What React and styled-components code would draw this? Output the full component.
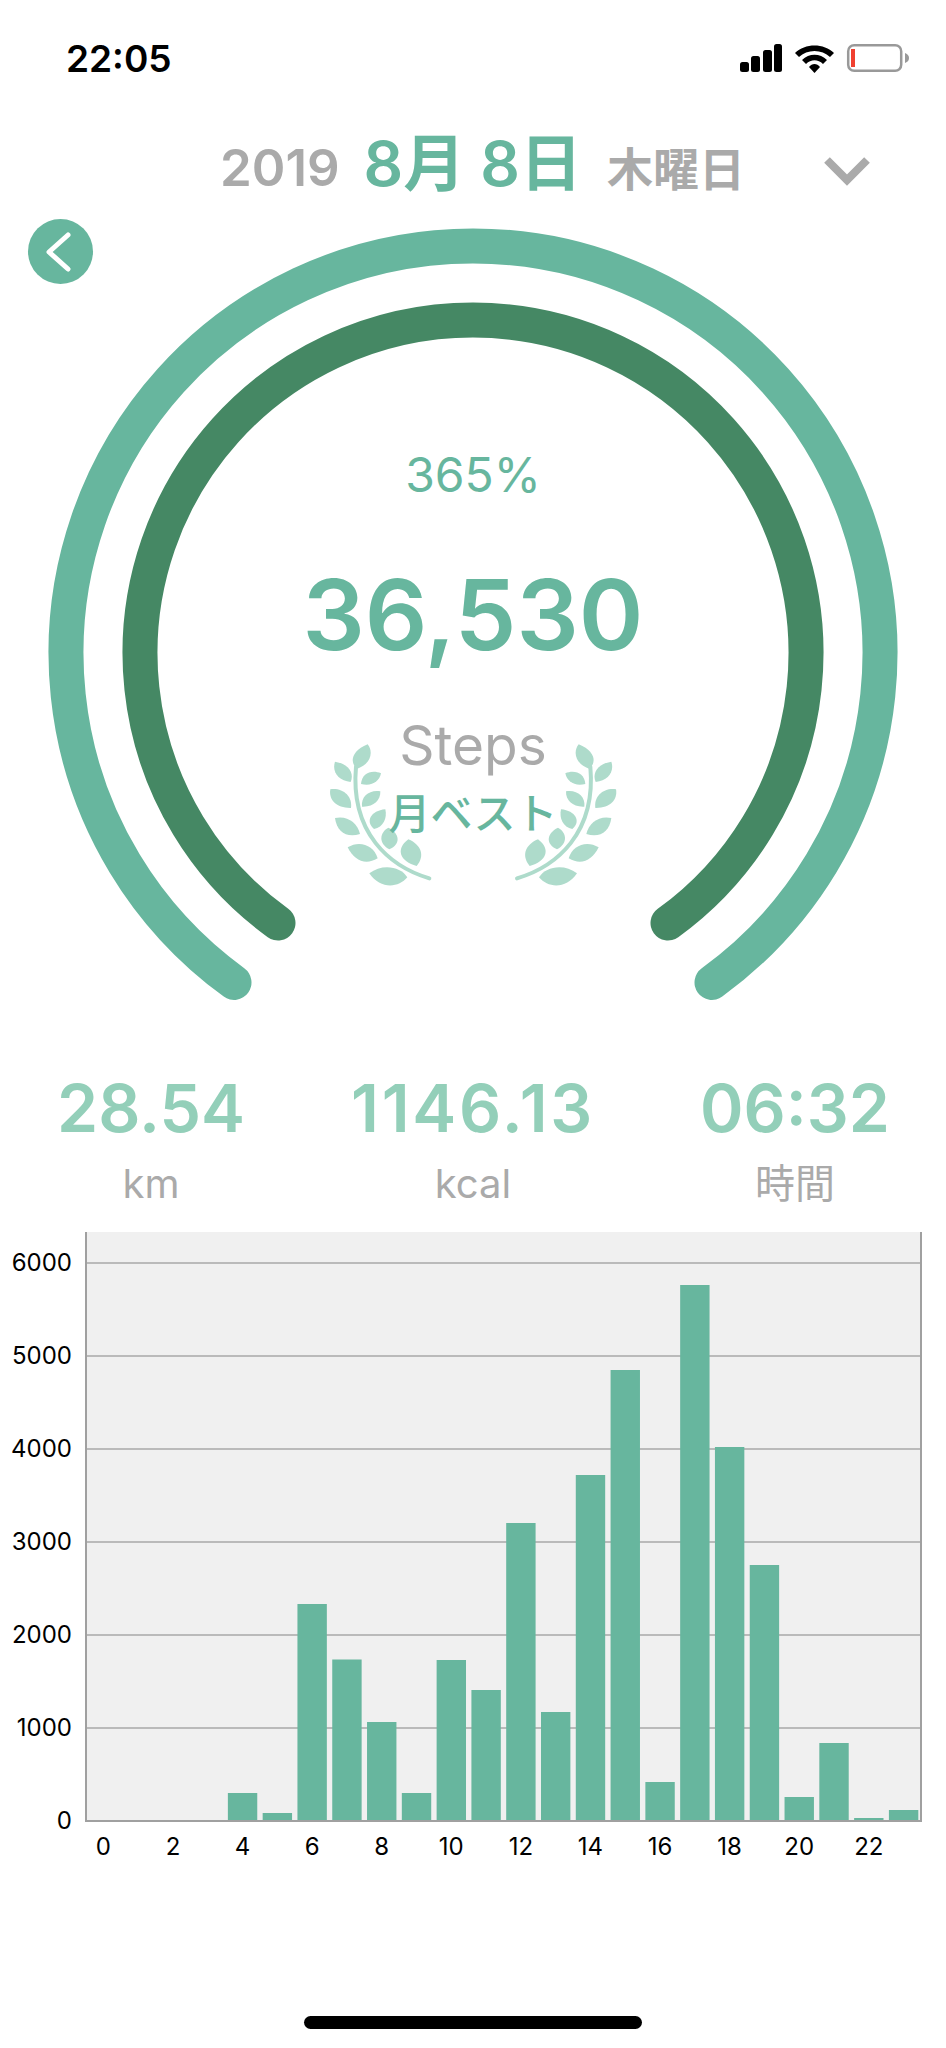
import styled, { createGlobalStyle } from 'styled-components';

const GREEN = '#67b69e';
const DARK_GREEN = '#458864';
const LIGHT_GREEN = '#93cfb9';
const LEAF = '#aedbcb';
const GRAY = '#aaaaaa';
const SANS = 'Inter, "Noto Sans CJK JP", sans-serif';

const GlobalStyle = createGlobalStyle`
  html, body {
    margin: 0;
    padding: 0;
    background: #fff;
  }
`;

const Page = styled.div`
  width: 946px;
  height: 2048px;
  overflow: hidden;
  display: flex;
  flex-direction: column;
  font-family: ${SANS};
  background: #fff;

  & > * {
    flex: none;
  }
`;

// barra de status
const StatusBar = styled.div`
  height: 116px;
  box-sizing: border-box;
  padding: 38px 36px 0 66px;
  display: flex;
  justify-content: space-between;
  align-items: flex-start;
`;

const Clock = styled.div`
  font-size: 37px;
  line-height: 42px;
  font-weight: 600;
  color: #000;
`;

const StatusIcons = styled.div`
  display: flex;
  align-items: center;
  margin-top: 5px;
`;

const DateRow = styled.div`
  height: 112px;
  box-sizing: border-box;
  padding-left: 220px;
  display: flex;
  align-items: baseline;
`;

const DatePart = styled.span`
  font-size: ${(p) => p.$size}px;
  line-height: 96px;
  font-weight: 600;
  color: ${(p) => p.$color};
  margin-left: ${(p) => p.$gap || 0}px;
`;

const Chevron = styled.svg`
  margin-left: 79px;
  align-self: flex-start;
  margin-top: 41px;
`;

const Gauge = styled.div`
  position: relative;
  height: 780px;
  display: flex;
  flex-direction: column;
  align-items: center;
  padding-top: 222px;
  box-sizing: border-box;
`;

const Rings = styled.svg`
  position: absolute;
  left: 0;
  top: 0;
`;

const BackButton = styled.div`
  position: absolute;
  left: 28px;
  top: -9px;
  width: 65px;
  height: 65px;
  border-radius: 50%;
  background: ${GREEN};
  display: flex;
  align-items: center;
  justify-content: center;
`;

const Percent = styled.div`
  position: relative;
  font-size: 48px;
  line-height: 50px;
  color: ${GREEN};
`;

const BigNumber = styled.div`
  position: relative;
  margin-top: 60px;
  font-size: 98px;
  line-height: 110px;
  font-weight: 600;
  color: ${GREEN};
`;

const StepsLabel = styled.div`
  position: relative;
  margin-top: 40px;
  font-size: 55px;
  line-height: 70px;
  color: ${GRAY};
`;

const Laurel = styled.svg`
  position: absolute;
  left: 300px;
  top: 462px;
`;

const BadgeText = styled.div`
  position: relative;
  margin-top: 9px;
  font-size: 42px;
  line-height: 50px;
  font-weight: 500;
  color: ${GREEN};
`;

const Stats = styled.div`
  margin-top: 62px;
  display: grid;
  grid-template-columns: repeat(3, 300px);
  column-gap: 22px;
  justify-content: center;
  height: 152px;
  align-content: start;
`;

const Stat = styled.div`
  display: flex;
  flex-direction: column;
  align-items: center;
`;

const StatValue = styled.div`
  font-size: 66px;
  line-height: 76px;
  font-weight: 600;
  letter-spacing: ${(p) => p.$spacing || 0}px;
  color: ${LIGHT_GREEN};
`;

const StatLabel = styled.div`
  margin-top: 13px;
  font-size: 40px;
  line-height: 50px;
  color: ${GRAY};
`;

const ChartWrap = styled.svg`
  display: block;
`;

const HomeBar = styled.div`
  width: 338px;
  height: 13px;
  border-radius: 7px;
  background: #000;
  margin: 144px auto 0;
`;

const hours = [0, 0, 0, 1, 28, 8, 217, 161.5, 99, 28, 161, 131, 298, 109, 346, 451, 39, 536, 374, 256, 24, 78, 3, 11];
const laurelLeaves = [
  'M172 236C150 220 150 185 203 163C220 185 215 220 172 236Z',
  'M152 276C115 272 95 245 105 215C140 220 165 245 152 276Z',
  'M183 282C185 250 215 238 243 250C238 275 215 290 183 282Z',
  'M153 354C110 355 85 330 91 298C128 293 158 318 153 354Z',
  'M186 350C182 318 210 298 241 304C242 332 220 352 186 350Z',
  'M180 432C140 445 110 425 105 384C142 376 172 398 180 432Z',
  'M222 417C195 395 212 362 256 358C262 385 250 412 222 417Z',
  'M233 505C195 528 162 510 143 472C178 450 222 465 233 505Z',
  'M268 478C235 460 238 428 265 413C300 430 303 462 268 478Z',
  'M350 528C300 515 285 478 325 448C365 465 375 498 350 528Z',
  'M322 562C295 595 240 598 208 550C245 520 302 528 322 562Z',
];

const PLOT_LEFT = 86;
const PLOT_RIGHT = 921;
const PLOT_TOP = 10;
const BASE = 599;
const SLOT = (PLOT_RIGHT - PLOT_LEFT) / 24;

function LaurelBranch() {
  return (
    <g fill={LEAF}>
      {laurelLeaves.map((d) => (
        <path key={d} d={d} />
      ))}
      <path d="M388 565C270 530 150 430 168 230" fill="none" stroke={LEAF} strokeWidth="12" strokeLinecap="round" />
    </g>
  );
}

function Chart() {
  return (
    <ChartWrap width="946" height="650" fontFamily="Inter, sans-serif" fontSize="24">
      <rect x={PLOT_LEFT} y={PLOT_TOP} width={PLOT_RIGHT - PLOT_LEFT} height={BASE - PLOT_TOP} fill="#f0f0f0" />
      {[1, 2, 3, 4, 5, 6].map((n) => (
        <line key={n} x1={PLOT_LEFT} x2={PLOT_RIGHT} y1={BASE - n * 93} y2={BASE - n * 93} stroke="#a8a8a8" strokeWidth="1.5" />
      ))}
      {hours.map((h, i) => (
        <rect key={i} x={PLOT_LEFT + i * SLOT + 2.7} y={BASE - h} width={SLOT - 5.4} height={h} fill={GREEN} />
      ))}
      <path d={`M${PLOT_LEFT} ${PLOT_TOP}V${BASE}H${PLOT_RIGHT}V${PLOT_TOP}`} fill="none" stroke="#a0a0a0" strokeWidth="2" />
      {[0, 1, 2, 3, 4, 5, 6].map((n) => (
        <text key={n} x="72" y={BASE - n * 93 + 8} textAnchor="end" fill="#000">
          {n * 1000}
        </text>
      ))}
      {hours.map((_, i) =>
        i % 2 === 0 ? (
          <text key={i} x={PLOT_LEFT + i * SLOT + SLOT / 2} y={BASE + 34} textAnchor="middle" fill="#000">
            {i}
          </text>
        ) : null
      )}
    </ChartWrap>
  );
}

export default function App() {
  return (
    <Page>
      <GlobalStyle />
      <StatusBar>
        <Clock>22:05</Clock>
        <StatusIcons>
          <svg width="172" height="30" viewBox="0 0 172 30">
            <g fill="#000">
              <rect x="2" y="19" width="9" height="10" rx="2.5" />
              <rect x="13" y="13" width="9" height="16" rx="2.5" />
              <rect x="25" y="7" width="9" height="22" rx="2.5" />
              <rect x="36" y="1" width="8" height="28" rx="2.5" />
              <path d="M57 10C67 0 86 0 96 10L92 14C84 6 69 6 61 14Z" />
              <path d="M64 17C71 10 82 10 89 17L85 21C80 16 73 16 68 21Z" />
              <path d="M71 24C74 20 79 20 82 24L76.5 30Z" />
            </g>
            <rect x="110.2" y="2.2" width="53" height="25.6" rx="6" fill="#fff" stroke="#999" strokeWidth="2.5" />
            <rect x="113" y="6" width="4" height="18" fill="#f04030" />
            <path d="M167 10C170 11 171 13 171 15C171 17 170 19 167 20Z" fill="#999" />
          </svg>
        </StatusIcons>
      </StatusBar>

      <DateRow>
        <DatePart $size={51} $color={GRAY}>2019</DatePart>
        <DatePart $size={62} $color={GREEN} $gap={24}>8月</DatePart>
        <DatePart $size={62} $color={GREEN} $gap={15}>8日</DatePart>
        <DatePart $size={46} $color={GRAY} $gap={25}>木曜日</DatePart>
        <Chevron width="46" height="30" viewBox="0 0 46 30">
          <path d="M3 3L23 23L43 3" fill="none" stroke={GRAY} strokeWidth="8" />
        </Chevron>
      </DateRow>

      <Gauge>
        <Rings width="946" height="780" viewBox="0 0 946 780">
          <path d="M234 754.4A407 407 0 1 1 712 754.4" fill="none" stroke={GREEN} strokeWidth="35" strokeLinecap="round" />
          <path d="M278 695A333 333 0 1 1 668 695" fill="none" stroke={DARK_GREEN} strokeWidth="35" strokeLinecap="round" />
        </Rings>
        <BackButton>
          <svg width="30" height="40" viewBox="0 0 30 40">
            <path d="M22 3L3 20L22 37" fill="none" stroke="#fff" strokeWidth="5" strokeLinecap="round" strokeLinejoin="round" />
          </svg>
        </BackButton>
        <Laurel width="350" height="220" viewBox="0 0 1050 660">
          <LaurelBranch />
          <g transform="translate(1039 0) scale(-1 1)">
            <LaurelBranch />
          </g>
        </Laurel>
        <Percent>365%</Percent>
        <BigNumber>36,530</BigNumber>
        <StepsLabel>Steps</StepsLabel>
        <BadgeText>月ベスト</BadgeText>
      </Gauge>

      <Stats>
        <Stat>
          <StatValue>28.54</StatValue>
          <StatLabel>km</StatLabel>
        </Stat>
        <Stat>
          <StatValue $spacing={2.7}>1146.13</StatValue>
          <StatLabel>kcal</StatLabel>
        </Stat>
        <Stat>
          <StatValue>06:32</StatValue>
          <StatLabel>時間</StatLabel>
        </Stat>
      </Stats>

      <Chart />
      <HomeBar />
    </Page>
  );
}
